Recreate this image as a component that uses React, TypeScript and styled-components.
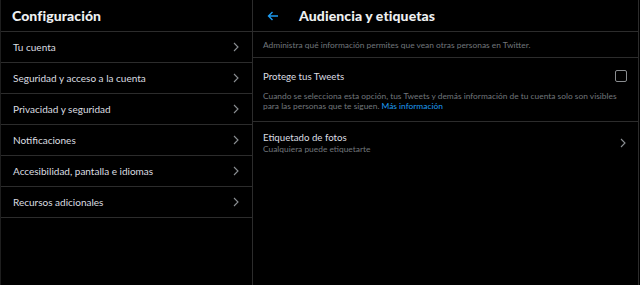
import styled, { createGlobalStyle } from 'styled-components';

const GlobalStyle = createGlobalStyle`
  html, body {
    margin: 0;
    padding: 0;
    background: #000;
  }
  body {
    font-family: 'Lato', 'Noto Sans', sans-serif;
    color: #e7e9ea;
  }
`;

const Page = styled.div`
  display: flex;
  width: 640px;
  height: 285px;
  background: #000;
  overflow: hidden;
`;

const Sidebar = styled.aside`
  width: 251px;
  border-left: 1px solid #1e1e1e;
  border-right: 1px solid #2c2c2c;
  display: flex;
  flex-direction: column;
`;

const Main = styled.section`
  width: 385px;
  border-right: 1px solid #2c2c2c;
  display: flex;
  flex-direction: column;
`;

const Header = styled.header<{ $inset?: number }>`
  height: 32px;
  box-sizing: border-box;
  border-bottom: 1px solid #2c2c2c;
  display: flex;
  align-items: center;
  gap: 20px;
  padding: 0 0 0 ${(p) => p.$inset ?? 11}px;
`;

const Title = styled.h1`
  margin: 0;
  font-size: 14px;
  font-weight: 900;
  color: #eef0f1;
  letter-spacing: 0.1px;
`;

const NavRow = styled.div`
  height: 31px;
  box-sizing: border-box;
  border-bottom: 1px solid #2c2c2c;
  display: flex;
  align-items: center;
  justify-content: space-between;
  padding: 0 13px 0 12px;
  font-size: 10px;
  color: #dcdee0;
`;

const Chevron = styled.svg`
  width: 6px;
  height: 10px;
  flex: none;
`;

const Arrow = styled.svg`
  width: 12px;
  height: 10px;
  margin-left: 4px;
  flex: none;
`;

const Section = styled.div<{ $pad: string; $last?: boolean }>`
  border-bottom: 1px solid ${(p) => (p.$last ? 'transparent' : '#2c2c2c')};
  padding: ${(p) => p.$pad};
`;

const Note = styled.p<{ $gap?: number }>`
  margin: ${(p) => p.$gap ?? 0}px 0 0;
  font-size: 8.4px;
  line-height: 10px;
  color: #71767b;
`;

const OptionRow = styled.div`
  display: flex;
  align-items: center;
  justify-content: space-between;
`;

const OptionText = styled.div`
  display: flex;
  flex-direction: column;
`;

const OptionTitle = styled.span`
  font-size: 9.7px;
  line-height: 14px;
  color: #dcdee0;
`;

const OptionSub = styled.span`
  font-size: 8.4px;
  line-height: 11px;
  color: #71767b;
`;

const Checkbox = styled.span`
  width: 10px;
  height: 10px;
  border: 1.5px solid #8a8d90;
  border-radius: 2px;
  margin-right: 1px;
`;

const Link = styled.span`
  color: #1d9bf0;
`;

const navItems = [
  'Tu cuenta',
  'Seguridad y acceso a la cuenta',
  'Privacidad y seguridad',
  'Notificaciones',
  'Accesibilidad, pantalla e idiomas',
  'Recursos adicionales',
];

function ChevronIcon() {
  return (
    <Chevron viewBox="0 0 6 10">
      <path d="M1 1 L5 5 L1 9" fill="none" stroke="#8b8f93" strokeWidth="1.1" />
    </Chevron>
  );
}

export default function App() {
  return (
    <Page>
      <GlobalStyle />
      <Sidebar>
        <Header>
          <Title>Configuración</Title>
        </Header>
        {navItems.map((item) => (
          <NavRow key={item}>
            <span>{item}</span>
            <ChevronIcon />
          </NavRow>
        ))}
      </Sidebar>
      <Main>
        <Header $inset={10}>
          <Arrow viewBox="0 0 12 10">
            <path d="M11 5 H1.5 M5.5 1 L1.5 5 L5.5 9" fill="none" stroke="#1d9bf0" strokeWidth="1.4" />
          </Arrow>
          <Title>Audiencia y etiquetas</Title>
        </Header>
        <Section $pad="8px 10px 7px">
          <Note>Administra qué información permites que vean otras personas en Twitter.</Note>
        </Section>
        <Section $pad="11px 10px 10px">
          <OptionRow>
            <OptionTitle>Protege tus Tweets</OptionTitle>
            <Checkbox />
          </OptionRow>
          <Note $gap={8}>
            Cuando se selecciona esta opción, tus Tweets y demás información de tu cuenta solo son visibles
            para las personas que te siguen. <Link>Más información</Link>
          </Note>
        </Section>
        <Section $pad="8px 12px 8px 10px" $last>
          <OptionRow>
            <OptionText>
              <OptionTitle>Etiquetado de fotos</OptionTitle>
              <OptionSub>Cualquiera puede etiquetarte</OptionSub>
            </OptionText>
            <ChevronIcon />
          </OptionRow>
        </Section>
      </Main>
    </Page>
  );
}
